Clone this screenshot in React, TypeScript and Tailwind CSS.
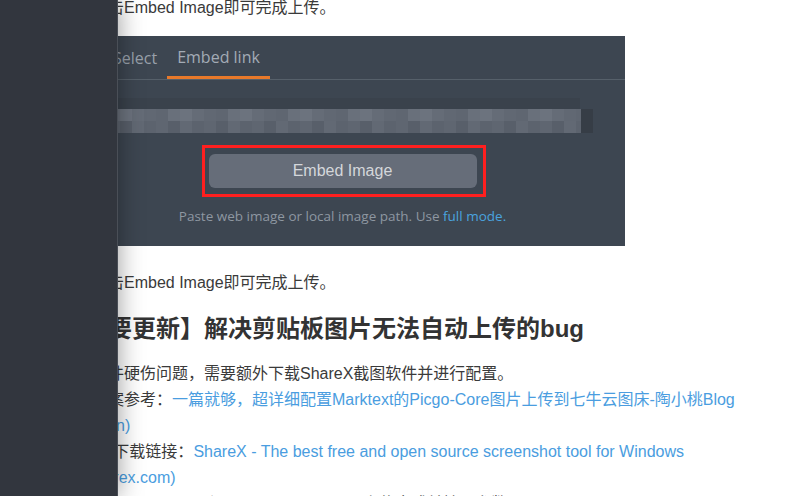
import React from "react";

const topRow = ["bg-[#656c77]", "bg-[#69707b]", "bg-[#616873]", "bg-[#6c737e]", "bg-[#5f6671]"];
const botRow = ["bg-[#5c636e]", "bg-[#5f6671]", "bg-[#585f6a]", "bg-[#626974]"];

function Mosaic() {
  const cols = Array.from({ length: 44 }, (_, i) => i);
  return (
    <div className="flex flex-col w-[521px] overflow-hidden">
      <div className="flex">
        {cols.map((i) => (
          <div key={i} className={"w-[12px] h-[12px] shrink-0 " + topRow[(i * 7 + 3) % 5]} />
        ))}
      </div>
      <div className="flex">
        {cols.map((i) => (
          <div key={i} className={"w-[12px] h-[12px] shrink-0 " + botRow[(i * 5 + 1) % 4]} />
        ))}
      </div>
    </div>
  );
}

export default function App() {
  return (
    <div className="w-[788px] h-[496px] flex overflow-hidden bg-white font-['Liberation_Sans','Noto_Sans_CJK_SC',sans-serif]">
      <div className="relative z-10 w-[118px] shrink-0 bg-[#32363e] border-r border-[#4a4f57] shadow-[0_0_24px_rgba(0,0,0,0.4)]" />
      <div className="flex-1 relative overflow-hidden">
        <div className="ml-[-58px] text-[16px] text-[#3a3a3a] leading-[26px]">
          <div className="mt-[-5px] whitespace-nowrap">最后点击Embed Image即可完成上传。</div>

          <div className="mt-[15px] w-[565px] bg-[#3d4651] font-['Open_Sans',sans-serif]">
            <div className="h-[43px] flex items-stretch pl-[43px] text-[16px] leading-[22px]">
              <div className="px-[10px] flex items-center text-[#98a0aa]">Select</div>
              <div className="px-[10px] flex items-center text-[#a3abb5] border-b-[3px] border-[#e8792a] pt-[2px]">Embed link</div>
            </div>
            <div className="h-px bg-[#56606a]" />
            <div className="mt-[18px] h-[35px] flex flex-col">
              <div className="h-[11px] w-[520px] bg-[#3a424c]" />
              <div className="flex">
                <Mosaic />
                <div className="w-[12px] h-[24px] bg-[#363d46]" />
              </div>
            </div>
            <div className="mt-[21px] flex justify-center">
              <div className="relative">
                <div className="w-[268px] h-[34px] rounded-[6px] bg-[#666d79] flex items-center justify-center text-[16px] text-[#d4d7db] font-['Liberation_Sans',sans-serif]">
                  Embed Image
                </div>
                <div className="absolute -left-[7px] -top-[9px] -right-[9px] -bottom-[9px] border-[3px] border-[#ff1f1f]" />
              </div>
            </div>
            <div className="mt-[19px] pb-[21px] text-center text-[13.5px] leading-[18px] text-[#8e97a1]">
              Paste web image or local image path. Use <span className="text-[#4aa3df]">full mode.</span>
            </div>
          </div>

          <div className="mt-[24px] whitespace-nowrap">最后点击Embed Image即可完成上传。</div>
          <div className="mt-[17px] text-[24px] leading-[32px] font-bold text-[#333] whitespace-nowrap">【重要更新】解决剪贴板图片无法自动上传的bug</div>
          <div className="mt-[16px] whitespace-nowrap">由于软件硬伤问题，需要额外下载ShareX截图软件并进行配置。</div>
          <div className="whitespace-nowrap">
            解决方案参考：<span className="text-[#4a9de0]">一篇就够，超详细配置Marktext的Picgo-Core图片上传到七牛云图床-陶小桃Blog</span>
          </div>
          <div className="whitespace-nowrap text-[#4a9de0]">(blogs.cn)</div>
          <div className="whitespace-nowrap">
            ShareX下载链接：<span className="text-[#4a9de0]">ShareX - The best free and open source screenshot tool for Windows</span>
          </div>
          <div className="whitespace-nowrap text-[#4a9de0]">(getsharex.com)</div>
          <div className="whitespace-nowrap">安装后打开ShareX，设置Custom uploader上传方式并填写参数。</div>
        </div>
      </div>
    </div>
  );
}
